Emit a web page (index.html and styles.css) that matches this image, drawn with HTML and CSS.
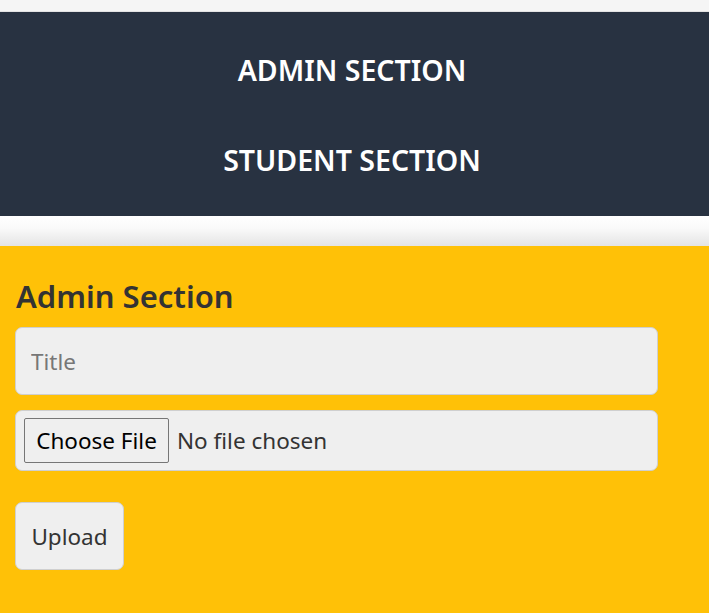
FILE: index.html
```html
<!DOCTYPE html>
<html>
<head>
<meta charset="utf-8">
<link rel="stylesheet" href="styles.css">
</head>
<body>
<div class="topstrip"></div>
<nav class="nav">
  <a class="nav-link">ADMIN SECTION</a>
  <a class="nav-link">STUDENT SECTION</a>
</nav>
<div class="spacer"></div>
<section class="panel">
  <h2 class="panel-title">Admin Section</h2>
  <form class="form">
    <input class="field field-text" type="text" placeholder="Title">
    <div class="field field-file">
      <span class="file-btn">Choose File</span>
      <span class="file-name">No file chosen</span>
    </div>
    <button class="upload" type="button">Upload</button>
  </form>
</section>
</body>
</html>
```
FILE: styles.css
```css
html, body {
  margin: 0;
  padding: 0;
  background: #ffffff;
  font-family: "Noto Sans", "Open Sans", sans-serif;
}
.topstrip {
  height: 11px;
  background: #f5f5f5;
  border-bottom: 1px solid #e3e3e3;
}
.nav {
  background: #283241;
  display: flex;
  flex-direction: column;
  align-items: center;
  padding: 13px 5px 11px 0;
  height: 180px;
}
.nav-link {
  color: #ffffff;
  font-weight: 600;
  font-size: 28.5px;
  height: 90px;
  display: flex;
  align-items: center;
  letter-spacing: 0;
}
.spacer {
  height: 30px;
  background: linear-gradient(#ffffff 0%, #fafafa 40%, #e4e4e4 100%);
}
.panel {
  background: #ffc107;
  padding: 30px 52px 60px 15px;
  min-height: 300px;
}
.panel-title {
  margin: 0 0 11px 1px;
  font-size: 31px;
  font-weight: 600;
  color: #333333;
  line-height: 40px;
}
.form {
  display: flex;
  flex-direction: column;
  align-items: flex-start;
}
.field {
  box-sizing: border-box;
  width: 643px;
  background: #efefef;
  border: 1px solid #cfcfcf;
  border-radius: 7px;
  font-family: inherit;
  font-size: 22.5px;
  color: #333;
}
.field-text {
  height: 68px;
  padding: 0 15px;
  outline: none;
  margin-bottom: 15px;
}
.field-text::placeholder {
  color: #777;
}
.field-file {
  height: 61px;
  display: flex;
  align-items: center;
  padding: 0 8px;
  gap: 8px;
}
.file-btn {
  box-sizing: border-box;
  height: 45px;
  width: 145px;
  border: 1px solid #767676;
  border-radius: 2px;
  background: #efefef;
  color: #000;
  display: flex;
  align-items: center;
  justify-content: center;
  font-size: 22.5px;
}
.file-name {
  color: #333;
}
.upload {
  margin-top: 31px;
  box-sizing: border-box;
  height: 68px;
  width: 109px;
  background: #efefef;
  border: 1px solid #cfcfcf;
  border-radius: 7px;
  font-family: inherit;
  font-size: 22.5px;
  color: #333;
  padding: 0;
}
```
